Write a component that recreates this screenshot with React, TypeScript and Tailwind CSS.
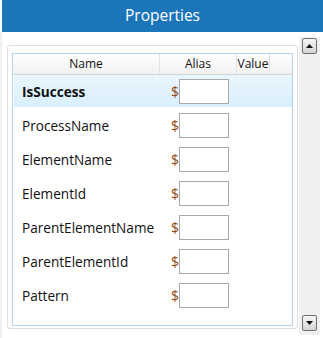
import React from "react";

const rows = [
  "IsSuccess",
  "ProcessName",
  "ElementName",
  "ElementId",
  "ParentElementName",
  "ParentElementId",
  "Pattern",
];

function ScrollBtn({ up }: { up: boolean }) {
  return (
    <div className="ml-[3px] w-[15px] h-[16px] rounded-[2px] border border-[#6f6f6f] bg-gradient-to-b from-[#f6f6f6] to-[#d4d4d4] flex items-center justify-center">
      <svg width="7" height="4" viewBox="0 0 7 4">
        {up ? (
          <polygon points="0,4 7,4 3.5,0" fill="#111" />
        ) : (
          <polygon points="0,0 7,0 3.5,4" fill="#111" />
        )}
      </svg>
    </div>
  );
}

export default function App() {
  return (
    <div className="w-[323px] h-[338px] bg-white overflow-hidden font-['Open_Sans',sans-serif]">
      <div className="ml-[2px] h-[32px] bg-[#1c75b9] flex items-center justify-center text-white text-[15.5px] leading-none pb-[1px]">
        Properties
      </div>
      <div className="flex h-[306px]">
        <div className="w-[2px] bg-[#f0f0f0]" />
        <div className="w-[297px] pl-[5px] pr-[1px] pt-[13px]">
          <div className="w-[291px] h-[284px] rounded-[3px] border border-[#d5dfe5] pl-[4px] pr-[4px] pt-[7px]">
            <div className="w-[281px] h-[273px] border border-[#b3d3ea] bg-white">
              <div className="flex h-[21px] bg-gradient-to-b from-white to-[#f1f1f1] border-b border-[#d5d5d5] text-[12px] text-[#111] leading-none">
                <div className="w-[147px] flex items-center justify-center border-r border-[#e2e2e2]">
                  Name
                </div>
                <div className="w-[77px] flex items-center justify-center border-r border-[#e2e2e2]">
                  Alias
                </div>
                <div className="w-[33px] flex items-center justify-center border-r border-[#e2e2e2]">
                  Value
                </div>
                <div className="flex-1" />
              </div>
              {rows.map((r, i) => (
                <div
                  key={r}
                  className={
                    "ml-[1px] w-[278px] h-[32px] mb-[2px] flex items-center " +
                    (i === 0 ? "bg-gradient-to-b from-[#eaf6fd] to-[#d8effc]" : "")
                  }
                >
                  <div
                    className={
                      "w-[145px] pl-[8px] pt-[2px] text-[13.6px] text-[#111] leading-none " +
                      (i === 0 ? "font-bold" : "")
                    }
                  >
                    {r}
                  </div>
                  <div className="flex items-center pl-[12px]">
                    <span className="text-[14px] pt-[2px] leading-none text-[#8f4a10] w-[8px]">$</span>
                    <div className="w-[50px] h-[25px] border border-[#a9a9a9] bg-white" />
                  </div>
                </div>
              ))}
            </div>
          </div>
        </div>
        <div className="mt-[5px] w-[21px] h-[298px] bg-[#f0f0f0] flex flex-col justify-between pt-[1px] pb-[4px]">
          <ScrollBtn up={true} />
          <ScrollBtn up={false} />
        </div>
      </div>
    </div>
  );
}
